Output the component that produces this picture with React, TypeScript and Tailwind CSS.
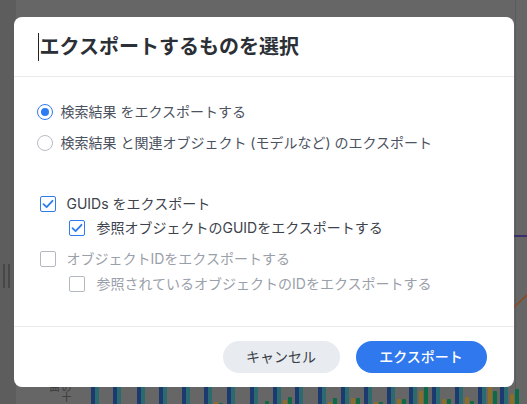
import React from "react";

const groups: { x: number; g: number; n: number }[] = [
  { x: 91, g: 0, n: 0 },
  { x: 113, g: 0, n: 0 },
  { x: 137, g: 0, n: 0 },
  { x: 159, g: 0, n: 0 },
  { x: 182, g: 0, n: 0 },
  { x: 204, g: 2, n: 1 },
  { x: 227, g: 0, n: 0 },
  { x: 250, g: 0, n: 3 },
  { x: 273, g: 4, n: 7 },
  { x: 295, g: 0, n: 0 },
  { x: 318, g: 2, n: 6 },
  { x: 341, g: 6, n: 6 },
  { x: 364, g: 2, n: 2 },
  { x: 387, g: 5, n: 5 },
  { x: 409, g: 13, n: 17 },
  { x: 432, g: 5, n: 5 },
  { x: 455, g: 7, n: 3 },
  { x: 478, g: 17, n: 13 },
  { x: 500, g: 10, n: 15 },
];

function Background() {
  return (
    <div className="absolute inset-0 overflow-hidden bg-[#666666]">
      <div className="absolute left-0 top-0 h-full w-[16px] bg-[#5d5d5d]" />
      <div className="absolute left-[3px] top-[264px] h-[24px] w-[2px] bg-[#474747]" />
      <div className="absolute left-[8px] top-[264px] h-[24px] w-[2px] bg-[#474747]" />
      <div className="absolute left-[515px] top-0 h-full w-px bg-[#5a5a5a]" />
      <div className="absolute left-[514px] top-[235px] h-[2px] w-[14px] bg-[#3b2f6e]" />
      <svg className="absolute left-[512px] top-[290px]" width="16" height="20">
        <line x1="0" y1="19" x2="16" y2="4" stroke="#8a4a22" strokeWidth="1.5" />
      </svg>
      <span
        className="absolute left-[48px] top-[382px] text-[10px] leading-[12px] text-[#3a3a3a] [writing-mode:vertical-rl]"
        style={{ fontFamily: '"Noto Sans CJK JP", sans-serif' }}
      >
        の十曲
      </span>
      {groups.map((b, i) => (
        <React.Fragment key={i}>
          <div className="absolute top-[370px] h-[40px] w-[4px] bg-[#1c3a70]" style={{ left: b.x }} />
          <div className="absolute top-[370px] h-[40px] w-[4px] bg-[#2b6a6e]" style={{ left: b.x + 4 }} />
          {b.g > 0 && <div className="absolute w-[4px] rounded-t-[1px] bg-[#8c6e28]" style={{ left: b.x + 10, top: 404 - b.g, height: b.g }} />}
          {b.n > 0 && <div className="absolute w-[4px] rounded-t-[1px] bg-[#0e6a44]" style={{ left: b.x + 15, top: 404 - b.n, height: b.n }} />}
        </React.Fragment>
      ))}
    </div>
  );
}

function Radio({ checked }: { checked: boolean }) {
  return checked ? (
    <span className="flex h-[16px] w-[16px] items-center justify-center rounded-full border-[1.5px] border-[#2f7bf0] bg-white">
      <span className="h-[8px] w-[8px] rounded-full bg-[#2f7bf0]" />
    </span>
  ) : (
    <span className="h-[16px] w-[16px] rounded-full border border-[#b8bdc5] bg-white" />
  );
}

function Check({ checked }: { checked: boolean }) {
  return checked ? (
    <span className="flex h-[16px] w-[16px] items-center justify-center rounded-[2px] border-[1.5px] border-[#2f7bf0] bg-white">
      <svg width="12" height="10" viewBox="0 0 12 10">
        <path d="M1.5 5.2 L4.6 8.2 L10.5 1.8" fill="none" stroke="#2f7bf0" strokeWidth="1.8" strokeLinecap="round" strokeLinejoin="round" />
      </svg>
    </span>
  ) : (
    <span className="h-[16px] w-[16px] rounded-[2px] border border-[#b4b9c1] bg-white" />
  );
}

export default function App() {
  return (
    <div className="relative h-[404px] w-[527px] overflow-hidden" style={{ fontFamily: 'Inter, "Noto Sans CJK JP", sans-serif' }}>
      <Background />
      <div className="absolute inset-0 flex items-center justify-center">
        <div className="flex h-[370px] w-[500px] flex-col rounded-[8px] bg-white">
          <div className="flex h-[60px] items-center border-b border-[#e8eaee] pl-[24px] pt-[1px]">
            <span className="mr-px h-[28px] w-px bg-[#222]" />
            <h1 className="text-[20px] font-semibold leading-[28px] text-[#2b2f36]">エクスポートするものを選択</h1>
          </div>
          <div className="flex flex-1 flex-col border-b border-[#e8eaee] pl-[23px] pt-[25px] text-[14px] leading-[20px]">
            <div className="flex h-[20px] items-center">
              <Radio checked />
              <span className="ml-[8px] text-[#4b5260]">検索結果 をエクスポートする</span>
            </div>
            <div className="mt-[11px] flex h-[20px] items-center">
              <Radio checked={false} />
              <span className="ml-[8px] text-[#4b5260]">検索結果 と関連オブジェクト (モデルなど) のエクスポート</span>
            </div>
            <div className="ml-[3px] mt-[41px] flex h-[20px] items-center">
              <Check checked />
              <span className="ml-[11px] text-[#3d424b]">GUIDs をエクスポート</span>
            </div>
            <div className="ml-[32px] mt-[4px] flex h-[20px] items-center">
              <Check checked />
              <span className="ml-[12px] text-[#3d424b]">参照オブジェクトのGUIDをエクスポートする</span>
            </div>
            <div className="ml-[3px] mt-[11px] flex h-[20px] items-center">
              <Check checked={false} />
              <span className="ml-[11px] text-[#9aa0a9]">オブジェクトIDをエクスポートする</span>
            </div>
            <div className="ml-[32px] mt-[5px] flex h-[20px] items-center">
              <Check checked={false} />
              <span className="ml-[12px] text-[#9aa0a9]">参照されているオブジェクトのIDをエクスポートする</span>
            </div>
          </div>
          <div className="flex h-[60px] items-center justify-end gap-[16px] pb-[1px] pr-[27px]">
            <button className="h-[32px] w-[117px] rounded-full bg-[#e8ecf1] text-[14px] text-[#3a3f47]">キャンセル</button>
            <button className="h-[32px] w-[131px] rounded-full bg-[#2f78ee] text-[14px] font-medium text-white">エクスポート</button>
          </div>
        </div>
      </div>
    </div>
  );
}
